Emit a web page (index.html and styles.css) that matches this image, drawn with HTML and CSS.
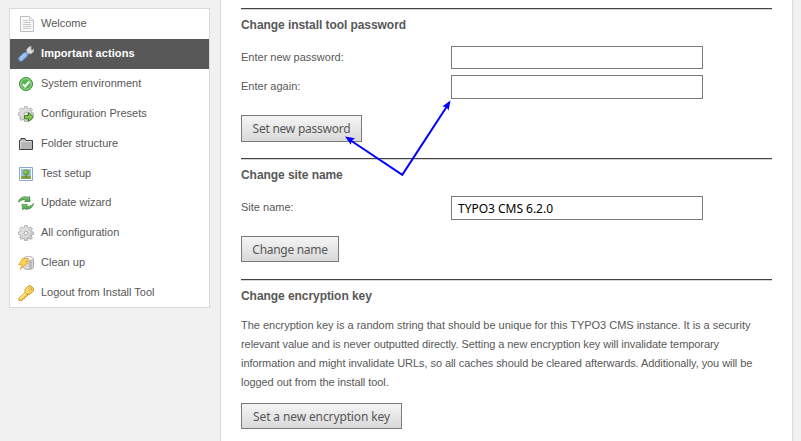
FILE: index.html
```html
<!DOCTYPE html>
<html lang="en">
<head>
<meta charset="utf-8">
<title>Install Tool</title>
<link rel="stylesheet" href="styles.css">
</head>
<body>
<svg class="defs" width="0" height="0" aria-hidden="true">
  <defs>
    <linearGradient id="metal" x1="0" y1="0" x2="1" y2="1"><stop offset="0" stop-color="#f2f2f2"/><stop offset="1" stop-color="#b8b8b8"/></linearGradient>
    <linearGradient id="green" x1="0" y1="0" x2="0" y2="1"><stop offset="0" stop-color="#8fce85"/><stop offset="1" stop-color="#3f9a3f"/></linearGradient>
    <linearGradient id="gold" x1="0" y1="0" x2="1" y2="1"><stop offset="0" stop-color="#fff08c"/><stop offset="1" stop-color="#f5bd2d"/></linearGradient>
    <g id="gear">
      <path d="M6.7.6h2.6l.4 2 1.2.5 1.8-1.2 1.7 1.8-1.1 1.7.5 1.3 2 .4v2.2l-2 .5-.5 1.2 1.1 1.8-1.8 1.7-1.7-1.1-1.2.5-.4 1.9H6.7l-.4-1.9-1.3-.5-1.7 1.1-1.8-1.7 1.2-1.8-.5-1.2-1.9-.5V7.1l1.9-.4.5-1.3-1.2-1.7 1.8-1.8L5 3.1l1.3-.5z" fill="url(#metal)" stroke="#a5a5a5" stroke-width=".8"/>
      <circle cx="8" cy="8.2" r="3.5" fill="#cdcdcd" stroke="#e2e2e2"/>
      <circle cx="8" cy="8.2" r="1.7" fill="#fff" stroke="#999" stroke-width=".7"/>
    </g>
  </defs>
</svg>
<nav class="menu">
  <a class="item"><svg class="icon" viewBox="0 0 16 16"><path d="M2.500.5h9l4 4v11h-13z" fill="#fafafa" stroke="#bdbdbd"/><path d="M11.500.5v4h4" fill="#eee" stroke="#c8c8c8"/><path d="M5 4.500h5M5 6.500h8M5 8.500h8M5 10.500h8M5 12.500h8" stroke="#c6c6c6"/></svg>Welcome</a>
  <a class="item active"><svg class="icon" viewBox="0 0 16 16"><path d="M8 7l1-1-.4-2.600L11.200.8l2-.3-.2 2.900 1.200 1 1.400-1.700.2 2.700-2.500 2.400-2.400-.2L9 9z" fill="#ddd" stroke="#aaa" stroke-width=".7"/><path d="M3 12.800L7.200 8.800" stroke="#6488cc" stroke-width="5.600" stroke-linecap="round"/><path d="M3 12.800L7.200 8.800" stroke="#9abcf2" stroke-width="3.800" stroke-linecap="round"/><path d="M2.500 11.600L6 8.200" stroke="#c6dcff" stroke-width="1"/></svg>Important actions</a>
  <a class="item"><svg class="icon" viewBox="0 0 16 16"><circle cx="8" cy="8" r="6.500" fill="#57b550" stroke="#3b8a38"/><circle cx="8" cy="8" r="5.300" fill="none" stroke="#a3dd95"/><path d="M4.800 8.100l2.300 2.400L11.300 5.500" fill="none" stroke="#fff" stroke-width="2"/></svg>System environment</a>
  <a class="item"><svg class="icon" viewBox="0 0 16 16"><use href="#gear"/><path d="M6.500 9.500h4v-3l5 4.600-5 4.400v-2.800h-4z" fill="#85c553" stroke="#39801f"/></svg>Configuration Presets</a>
  <a class="item"><svg class="icon" viewBox="0 0 16 16"><path d="M1.500 13.500v-9l1.500-1v-1h4l1 2h6.500v9z" fill="#b5b5b5" stroke="#3d3d3d"/><path d="M2.500 5.500h11M2.500 5v8" stroke="#ddd"/></svg>Folder structure</a>
  <a class="item"><svg class="icon" viewBox="0 0 16 16"><path d="M1.500 1.500h13v13h-13z" fill="#fff" stroke="#8ba9d8"/><path d="M3 3h10v10H3z" fill="#97bce9"/><path d="M3 10h10v3H3z" fill="#7ba847"/><path d="M7.500 8h1.500v4H7.500z" fill="#986d32"/><circle cx="8.200" cy="6.500" r="3.100" fill="#69ab38"/><circle cx="7.500" cy="5.800" r="1.500" fill="#8dc651"/></svg>Test setup</a>
  <a class="item"><svg class="icon" viewBox="0 0 16 16"><g fill="url(#green)" stroke="#3c853e" stroke-width=".7"><path d="M.5 7C1.500 3 4.500 1.500 8 1.800l2 .7 1.500-1.200.7 5.200-5.700.1 1.500-1.600C5.500 4.200 3.500 4.700.5 7z"/><path d="M15.500 8.500c-.7 4-3.800 5.900-7.500 5.700l-2-.7-1.300 1.300-.7-5.400 5.600.1-1.500 1.600c2.500.7 4.900 0 7.400-2.600z"/></g></svg>Update wizard</a>
  <a class="item"><svg class="icon" viewBox="0 0 16 16"><use href="#gear"/></svg>All configuration</a>
  <a class="item"><svg class="icon" viewBox="0 0 16 16"><path d="M5.500 3.500v9c0 2.600 10 2.600 10 0v-9z" fill="#dadada" stroke="#aaa"/><path d="M12.500 5v9" stroke="#bbb" stroke-width="3"/><ellipse cx="10.500" cy="3.500" rx="5" ry="2" fill="#f7f7f7" stroke="#b5b5b5"/><path d="M4.500 3.500h6L8.200 7h2.300L2 14.500l2.400-4.700H.8z" fill="#ffd452" stroke="#dfa13a" stroke-width=".9"/></svg>Clean up</a>
  <a class="item"><svg class="icon" viewBox="0 0 16 16"><path d="M8 6.800L.9 13.200l.2 2.300 3.200-.3.700-1.500 1.600-.2.300-1.600 1.600-.3L10 10z" fill="url(#gold)" stroke="#c98a18" stroke-width=".9"/><path fill-rule="evenodd" d="M7 4.500L10.500.8h2.300l2.700 2.700v2.300L12 9.300H9.300L7 7zM11.900 2.400l-1 1 1.800 1.800 1-1z" fill="url(#gold)" stroke="#c98a18" stroke-width=".9"/><path d="M2 13.300l7-6.300" stroke="#fff5a8"/></svg>Logout from Install Tool</a>
</nav>
<main class="content">
  <section class="block">
    <h2>Change install tool password</h2>
    <div class="fields">
      <label for="pw">Enter new password:</label><input id="pw" class="first" type="password">
      <label for="pw2">Enter again:</label><input id="pw2" type="password">
    </div>
    <button class="tall set">Set new password</button>
  </section>
  <section class="block">
    <h2>Change site name</h2>
    <div class="fields">
      <label for="site">Site name:</label><input id="site" type="text" value="TYPO3 CMS 6.2.0">
    </div>
    <button class="name">Change name</button>
  </section>
  <section class="block">
    <h2>Change encryption key</h2>
    <p><span class="normal">The encryption key is a random string that should be unique for this TYPO3 CMS instance. It is a security</span> <span class="tight">relevant value and is never outputted directly. Setting a new encryption key will invalidate temporary information and might invalidate URLs, so all caches should be cleared afterwards. Additionally, you will be logged out from the install tool.</span></p>
    <button class="key">Set a new encryption key</button>
  </section>
</main>
<svg class="arrows" width="801" height="441" viewBox="0 0 801 441">
  <path d="M350 140L402.300 174.800L446.500 107" fill="none" stroke="#00f" stroke-width="2"/>
  <path d="M345 136.500l10 1.800-3.300 2.400-.9 4zM450.500 100.500l-1.900 10-2.300-3.400-4.100-.7z" fill="#00f"/>
</svg>
</body>
</html>
```
FILE: styles.css
```css
* { box-sizing: border-box; }
body {
  margin: 0;
  height: 441px;
  overflow: hidden;
  display: flex;
  align-items: flex-start;
  background: #f1f1f1;
  color: #585858;
  font: 11px/19px "Liberation Sans", Arial, sans-serif;
}
.defs { position: absolute; }
.menu {
  width: 201px;
  height: 300px;
  margin: 8px 10px 0 9px;
  border: 1px solid #dadada;
  background: #fff;
  display: grid;
  grid-template-rows: repeat(5, 30px) 30px 29px 30px 30px 29px;
}
.item {
  display: flex;
  align-items: flex-start;
  gap: 7px;
  padding: 5px 0 0 8px;
}
.item:nth-child(n+7) { padding-top: 4px; }
.item:nth-child(n+8) { padding-top: 5px; }
.active { background: #585858; color: #fff; font-weight: bold; letter-spacing: .08px; }
.icon { width: 16px; height: 16px; flex: none; margin-top: 2px; }
.content {
  width: 573px;
  height: 441px;
  padding: 8px 20px 0;
  border: solid #dadada;
  border-width: 0 1px;
  background: #fff;
}
.block {
  border-top: 1px solid #434343;
  box-shadow: inset 0 1px #d6d6d6;
  padding-top: 7px;
  margin-bottom: 16px;
}
.block:nth-child(2) { margin-bottom: 17px; }
h2 { margin: 0 0 11px; font-size: 12px; line-height: 19px; letter-spacing: -.06px; }
.block:nth-child(3) h2 { margin-bottom: 10px; }
.fields {
  display: grid;
  grid-template-columns: 210px 252px;
  row-gap: 6px;
  margin-bottom: 16px;
}
label { line-height: 22px; }
input {
  width: 252px;
  height: 24px;
  margin: 0;
  padding: 1px 6px 0;
  border: 1px solid #7b7b7b;
  border-radius: 0;
  background: #fff;
  color: #000;
  font: 12px "Noto Sans", sans-serif;
  letter-spacing: -.02px;
}
input.first { height: 23px; }
button {
  display: block;
  height: 26px;
  padding: 0;
  border: 1px solid #7b7b7b;
  border-radius: 0;
  background: linear-gradient(#f5f5f5, #d9d9d9);
  color: #585858;
  font: 12px "Noto Sans", sans-serif;
  letter-spacing: -.18px;
  white-space: nowrap;
}
.tall { height: 27px; }
.set { width: 121px; letter-spacing: -.24px; }
.name { width: 98px; letter-spacing: -.3px; }
.key { width: 161px; letter-spacing: -.12px; }
p { margin: 0 0 11px; width: 522px; }
.normal { letter-spacing: -.02px; }
.tight { letter-spacing: -.065px; }
.arrows { position: absolute; left: 0; top: 0; pointer-events: none; }
```
